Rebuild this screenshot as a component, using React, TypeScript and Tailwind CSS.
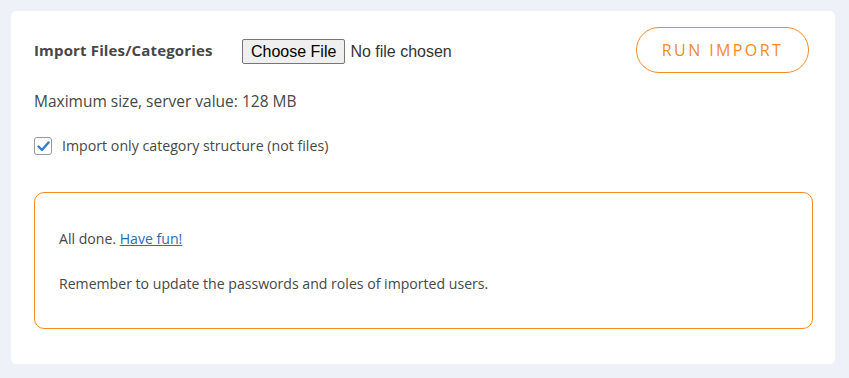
import React from "react";

export default function App() {
  return (
    <div className="min-h-screen bg-[#eef1f7] pl-[11px] pr-[14px] pt-[11px] pb-[14px]" style={{ fontFamily: "'Open Sans', 'Noto Sans', sans-serif" }}>
      <div className="bg-white rounded-[5px] pl-[23px] pr-[22px] pt-[16px] pb-[35px] text-[#474747]">
        <div className="flex items-center h-[46px]">
          <div className="w-[208px] font-bold text-[15px] tracking-[0.01em] text-[#474747]">Import Files/Categories</div>
          <div className="flex items-center mt-[3px]" style={{ fontFamily: "'Liberation Sans', Arial, sans-serif" }}>
            <span className="h-[25px] px-[8px] flex items-center border border-[#767676] bg-[#efefef] rounded-[2px] text-[16px] text-black">Choose File</span>
            <span className="ml-[5px] text-[16px] text-[#333]">No file chosen</span>
          </div>
          <button className="ml-auto mr-[4px] h-[46px] w-[173px] rounded-full border border-[#f58a2b] text-[#f58a2b] text-[16px] tracking-[0.15em]">RUN IMPORT</button>
        </div>
        <div className="mt-[18px] text-[15.5px] leading-[20px]">Maximum size, server value: 128 MB</div>
        <div className="mt-[25px] flex items-center text-[14.2px] leading-[20px]">
          <span className="w-[18px] h-[18px] rounded-[3px] border border-[#9a9a9a] flex items-center justify-center">
            <svg width="13" height="11" viewBox="0 0 13 11"><path d="M1.5 5.5 L5 9 L11.5 1.5" fill="none" stroke="#2f7fd0" strokeWidth="2.4" strokeLinecap="round" strokeLinejoin="round" /></svg>
          </span>
          <span className="ml-[10px]">Import only category structure (not files)</span>
        </div>
        <div className="mt-[36px] border border-[#f58a2b] rounded-[10px] px-[24px] pt-[36px] pb-[34px] text-[14.1px] leading-[20px]">
          <p>All done. <a href="#" className="text-[#2a6db0] underline">Have fun!</a></p>
          <p className="mt-[25px]">Remember to update the passwords and roles of imported users.</p>
        </div>
      </div>
    </div>
  );
}
